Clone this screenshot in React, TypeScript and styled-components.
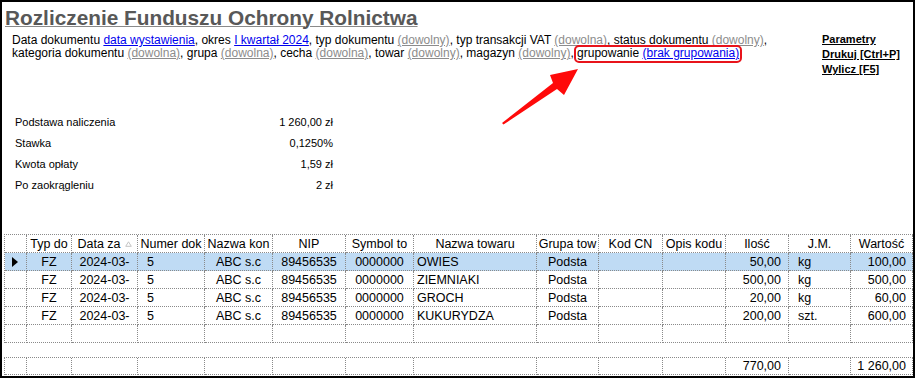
import React from 'react';
import styled, { createGlobalStyle } from 'styled-components';

const Global = createGlobalStyle`
  html, body { margin: 0; padding: 0; background: #fff; }
  body { font-family: "Liberation Sans", Arial, sans-serif; color: #000; }
`;

const Frame = styled.div`
  position: relative;
  width: 915px;
  height: 378px;
  box-sizing: border-box;
  border: 2px solid #000;
  padding-left: 2px;
  background: #fff;
  overflow: hidden;
  display: flex;
  flex-direction: column;
`;

const Header = styled.div`
  display: flex;
  align-items: flex-start;
`;

const HeaderMain = styled.div`
  flex: 1;
  min-width: 0;
`;

const Title = styled.h1`
  margin: 4px 0 0 1px;
  font: bold 20.8px/23px "Liberation Sans", Arial, sans-serif;
  color: #585858;
  text-decoration: underline;
  text-decoration-color: #8a8a8a;
  text-decoration-thickness: 1px;
`;

const Description = styled.div`
  margin: 5px 0 0 8px;
  font-size: 12px;
  line-height: 13px;
`;

const Line = styled.div`
  white-space: nowrap;
`;

const Link = styled.a<{ $muted?: boolean }>`
  color: ${(p) => (p.$muted ? '#8c8c8c' : '#0000ee')};
  text-decoration: underline;
  cursor: pointer;
`;

const Marked = styled.span`
  position: relative;
  &::after {
    content: '';
    position: absolute;
    left: -3px;
    right: -3px;
    top: -1px;
    bottom: -3px;
    border: 2px solid #e8141b;
    border-radius: 5px;
    pointer-events: none;
  }
`;

const Actions = styled.div`
  width: 91px;
  flex-shrink: 0;
  padding-top: 30px;
  display: flex;
  flex-direction: column;
  align-items: flex-start;
`;

const Action = styled.a`
  font: bold 11px/15px "Liberation Sans", Arial, sans-serif;
  color: #000;
  text-decoration: underline;
  cursor: pointer;
  white-space: nowrap;
`;

const Summary = styled.div`
  margin: 35px 0 0 11px;
  width: 318px;
  display: grid;
  grid-template-columns: 1fr auto;
  font-size: 11px;
  line-height: 21px;
  color: #000;
`;

const SummaryValue = styled.div`
  text-align: right;
`;

const COLS = [22, 45, 66, 67, 68, 73, 68, 123, 62, 64, 63, 63, 62, 62];

const Grid = styled.div<{ $top: number }>`
  margin-top: ${(p) => p.$top}px;
  width: 909px;
  box-sizing: border-box;
  display: grid;
  grid-template-columns: ${COLS.map((c) => `${c}px`).join(' ')};
  border-top: 1px dotted #8a8a8a;
  border-left: 1px dotted #8a8a8a;
  font-size: 12.5px;
`;

type Align = 'left' | 'center' | 'right';

const Cell = styled.div<{ $align: Align; $pad: number; $selected?: boolean; $h?: number }>`
  height: ${(p) => p.$h ?? 18}px;
  box-sizing: border-box;
  border-right: 1px dotted #8a8a8a;
  border-bottom: 1px dotted #8a8a8a;
  background: ${(p) => (p.$selected ? '#bfdbf4' : '#fff')};
  display: flex;
  align-items: center;
  justify-content: ${(p) => (p.$align === 'left' ? 'flex-start' : p.$align === 'right' ? 'flex-end' : 'center')};
  padding: 0 ${(p) => (p.$align === 'right' ? p.$pad : 0)}px 0 ${(p) => (p.$align === 'left' ? p.$pad : 0)}px;
  white-space: nowrap;
  overflow: hidden;
`;

const HeadCell = styled(Cell)`
  color: #000;
`;

const Pointer = styled.span`
  width: 0;
  height: 0;
  border-left: 6px solid #000;
  border-top: 5px solid transparent;
  border-bottom: 5px solid transparent;
`;

const SortMark = styled.svg`
  margin-left: 4px;
  flex-shrink: 0;
`;

const Arrow = styled.svg`
  position: absolute;
  left: 498px;
  top: 64px;
  pointer-events: none;
`;

const columns: { head: string; align: Align; pad: number }[] = [
  { head: '', align: 'left', pad: 7 },
  { head: 'Typ do', align: 'center', pad: 0 },
  { head: 'Data za', align: 'center', pad: 0 },
  { head: 'Numer dok', align: 'left', pad: 9 },
  { head: 'Nazwa kon', align: 'center', pad: 0 },
  { head: 'NIP', align: 'center', pad: 0 },
  { head: 'Symbol to', align: 'center', pad: 0 },
  { head: 'Nazwa towaru', align: 'left', pad: 3 },
  { head: 'Grupa tow', align: 'center', pad: 0 },
  { head: 'Kod CN', align: 'center', pad: 0 },
  { head: 'Opis kodu', align: 'center', pad: 0 },
  { head: 'Ilość', align: 'right', pad: 7 },
  { head: 'J.M.', align: 'left', pad: 9 },
  { head: 'Wartość', align: 'right', pad: 6 },
];

const rows: string[][] = [
  ['FZ', '2024-03-', '5', 'ABC s.c', '89456535', '0000000', 'OWIES', 'Podsta', '', '', '50,00', 'kg', '100,00'],
  ['FZ', '2024-03-', '5', 'ABC s.c', '89456535', '0000000', 'ZIEMNIAKI', 'Podsta', '', '', '500,00', 'kg', '500,00'],
  ['FZ', '2024-03-', '5', 'ABC s.c', '89456535', '0000000', 'GROCH', 'Podsta', '', '', '20,00', 'kg', '60,00'],
  ['FZ', '2024-03-', '5', 'ABC s.c', '89456535', '0000000', 'KUKURYDZA', 'Podsta', '', '', '200,00', 'szt.', '600,00'],
  ['', '', '', '', '', '', '', '', '', '', '', '', ''],
];

const totals = ['', '', '', '', '', '', '', '', '', '', '770,00', '', '1 260,00'];

const summary = [
  ['Podstawa naliczenia', '1 260,00 zł'],
  ['Stawka', '0,1250%'],
  ['Kwota opłaty', '1,59 zł'],
  ['Po zaokrągleniu', '2 zł'],
];

export default function App() {
  return (
    <>
      <Global />
      <Frame>
        <Header>
          <HeaderMain>
            <Title>Rozliczenie Funduszu Ochrony Rolnictwa</Title>
            <Description>
              <Line>
                Data dokumentu <Link>data wystawienia</Link>, okres <Link>I kwartał 2024</Link>, typ dokumentu{' '}
                <Link $muted>(dowolny)</Link>, typ transakcji VAT <Link $muted>(dowolna)</Link>, status dokumentu{' '}
                <Link $muted>(dowolny)</Link>,
              </Line>
              <Line>
                kategoria dokumentu <Link $muted>(dowolna)</Link>, grupa <Link $muted>(dowolna)</Link>, cecha{' '}
                <Link $muted>(dowolna)</Link>, towar <Link $muted>(dowolny)</Link>, magazyn{' '}
                <Link $muted>(dowolny)</Link>,{' '}
                <Marked>
                  grupowanie <Link>(brak grupowania)</Link>
                </Marked>
              </Line>
            </Description>
          </HeaderMain>
          <Actions>
            <Action>Parametry</Action>
            <Action>Drukuj [Ctrl+P]</Action>
            <Action>Wylicz [F5]</Action>
          </Actions>
        </Header>

        <Summary>
          {summary.map(([label, value]) => (
            <React.Fragment key={label}>
              <div>{label}</div>
              <SummaryValue>{value}</SummaryValue>
            </React.Fragment>
          ))}
        </Summary>

        <Grid $top={38}>
          {columns.map((c, i) => (
            <HeadCell key={`h${i}`} $align="center" $pad={0}>
              {c.head}
              {c.head === 'Data za' && (
                <SortMark width="7" height="6" viewBox="0 0 7 6">
                  <path d="M3.5 0.8 L6.3 5.3 L0.7 5.3 Z" fill="none" stroke="#c4c4c4" strokeWidth="1" />
                </SortMark>
              )}
            </HeadCell>
          ))}
          {rows.map((r, ri) => (
            <React.Fragment key={`r${ri}`}>
              <Cell $align="left" $pad={7} $selected={ri === 0}>
                {ri === 0 && <Pointer />}
              </Cell>
              {r.map((v, ci) => {
                const col = columns[ci + 1];
                return (
                  <Cell key={ci} $align={col.align} $pad={col.pad} $selected={ri === 0}>
                    {v}
                  </Cell>
                );
              })}
            </React.Fragment>
          ))}
        </Grid>

        <Grid $top={14}>
          <Cell $align="left" $pad={0} $h={17} />
          {totals.map((v, ci) => {
            const col = columns[ci + 1];
            return (
              <Cell key={ci} $align={col.align} $pad={col.pad} $h={17}>
                {v}
              </Cell>
            );
          })}
        </Grid>

        <Arrow width="82" height="62" viewBox="0 0 82 62">
          <polygon points="2,57 53,17 50,9 78,3 64,29 57,23 3.5,58.5" fill="#ff0a0a" />
        </Arrow>
      </Frame>
    </>
  );
}
